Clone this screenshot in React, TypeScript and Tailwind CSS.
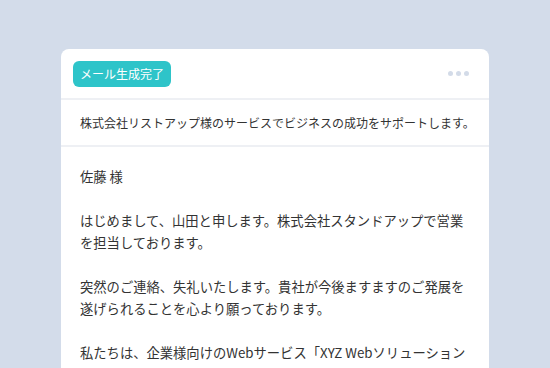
const font = { fontFamily: '"Noto Sans CJK JP", "Noto Sans", sans-serif' };

export default function App() {
  const paragraphs = [
    '佐藤 様',
    'はじめまして、山田と申します。株式会社スタンドアップで営業を担当しております。',
    '突然のご連絡、失礼いたします。貴社が今後ますますのご発展を遂げられることを心より願っております。',
  ];

  return (
    <div className="w-[550px] h-[368px] overflow-hidden bg-[#d3dcea] pt-[49px] pl-[61px]" style={font}>
      <div className="w-[428px] h-[400px] bg-white rounded-lg">
        <div className="h-[51px] flex items-center justify-between pl-3 pr-5 border-b-2 border-[#eef0f4]">
          <span className="h-[26px] px-[7px] flex items-center rounded-md bg-[#2ec4c9] text-white text-[12px]">
            メール生成完了
          </span>
          <div className="flex gap-[3px]">
            <span className="w-[5px] h-[5px] rounded-full bg-[#d3dbe8]" />
            <span className="w-[5px] h-[5px] rounded-full bg-[#d3dbe8]" />
            <span className="w-[5px] h-[5px] rounded-full bg-[#d3dbe8]" />
          </div>
        </div>
        <div className="h-[47px] flex items-center px-[19px] border-b-2 border-[#eef0f4] text-[12px] text-[#333] whitespace-nowrap">
          株式会社リストアップ様のサービスでビジネスの成功をサポートします。
        </div>
        <div className="pt-[19px] px-[19px] text-[13.3px] leading-[22px] text-[#333] flex flex-col gap-[22px]">
          {paragraphs.map((p) => (
            <p key={p}>{p}</p>
          ))}
          <p className="[line-break:anywhere]">
            私たちは、企業様向けのWebサービス「XYZ Webソリューション」をご提供しております。
          </p>
        </div>
      </div>
    </div>
  );
}
